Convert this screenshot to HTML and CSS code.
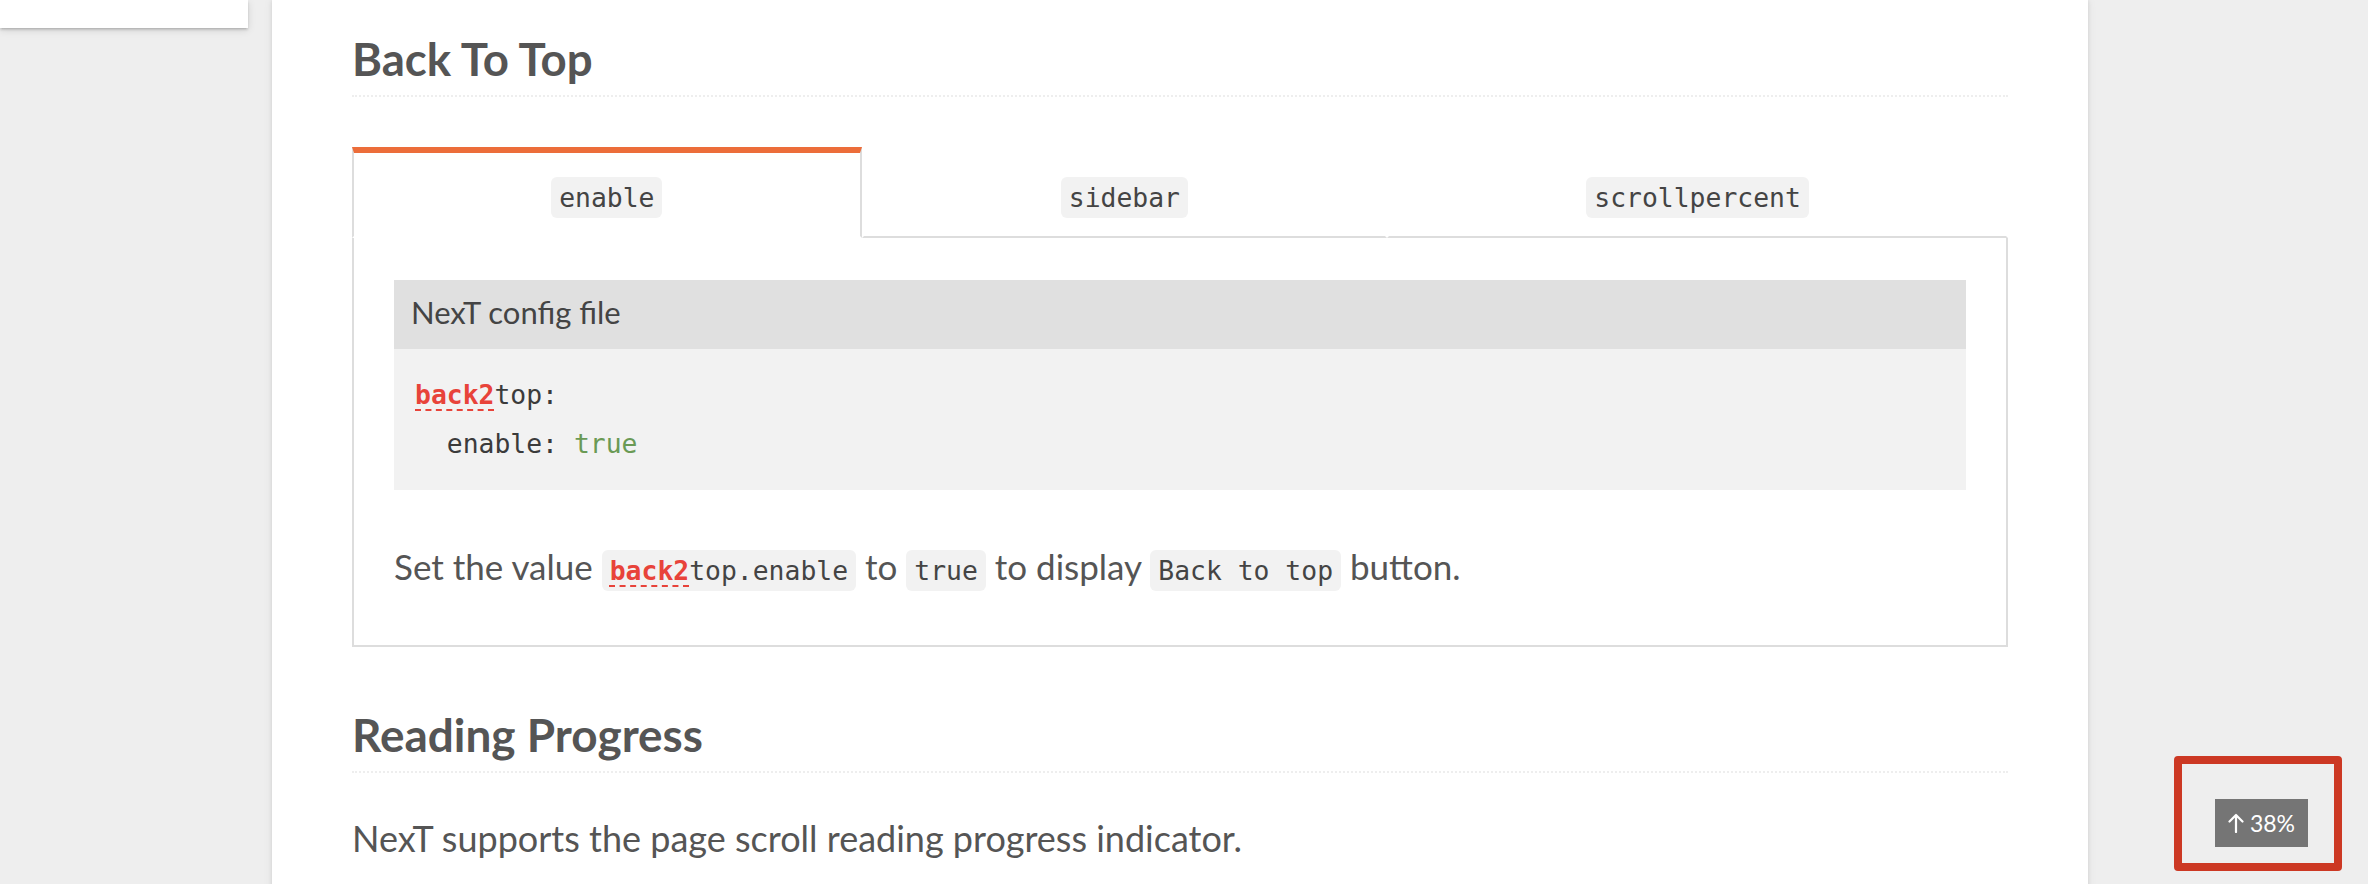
FILE: index.html
```html
<!DOCTYPE html>
<html lang="en">
<head>
<meta charset="utf-8">
<title>Back To Top - NexT</title>
<link rel="stylesheet" href="styles.css">
</head>
<body>
<div class="page">
  <aside class="sidebar"><div class="sidebar-inner"></div></aside>
  <main class="main">
    <article class="post-body">
      <h2 class="heading">Back To Top</h2>
      <div class="tabs">
        <ul class="nav-tabs">
          <li class="tab active"><code class="pill">enable</code></li>
          <li class="tab"><code class="pill">sidebar</code></li>
          <li class="tab"><code class="pill">scrollpercent</code></li>
        </ul>
        <div class="tab-content">
          <figure class="highlight">
            <figcaption class="caption">NexT config file</figcaption>
            <pre class="code"><span class="err">back2</span>top:
  enable: <span class="bool">true</span></pre>
          </figure>
          <p class="text">Set the value <code class="inline"><span class="err">back2</span>top.enable</code> to <code class="inline">true</code> to display <code class="inline">Back to top</code> button.</p>
        </div>
      </div>
      <h2 class="heading heading-next">Reading Progress</h2>
      <p class="text text-next">NexT supports the page scroll reading progress indicator.</p>
    </article>
  </main>
</div>
<div class="back-to-top">
  <svg class="arrow" viewBox="0 0 16 20" width="16" height="20" aria-hidden="true"><path d="M8 19V2M1.5 8.5L8 2l6.5 6.5" fill="none" stroke="#fff" stroke-width="2.2" stroke-linecap="round" stroke-linejoin="round"/></svg>
  <span class="percent">38%</span>
</div>
<div class="highlight-box"></div>
</body>
</html>
```
FILE: styles.css
```css
html, body {
  margin: 0;
  padding: 0;
  overflow: hidden;
  height: 884px;
}
body {
  background: #eee;
  color: #555;
  font-family: Lato, "Noto Sans", sans-serif;
}
.page {
  display: flex;
  align-items: flex-start;
  gap: 24px;
}
.sidebar {
  width: 248px;
  flex: none;
}
.sidebar-inner {
  height: 28px;
  background: #fff;
  box-shadow: 0 2px 2px 0 rgba(0,0,0,.12), 0 3px 1px -2px rgba(0,0,0,.06), 0 2px 8px 0 rgba(0,0,0,.12);
}
.main {
  width: 1816px;
  flex: none;
  min-height: 1000px;
  background: #fff;
  box-sizing: border-box;
  padding: 24px 80px 0;
  box-shadow: 0 0 4px rgba(0,0,0,.10), 0 0 10px rgba(0,0,0,.06);
}
.heading {
  margin: 0;
  font-size: 45.6px;
  font-weight: 700;
  line-height: 70px;
  padding-bottom: 1px;
  border-bottom: 2px dotted #eee;
  color: #555;
}
.heading-next {
  margin-top: 53px;
  font-size: 45.9px;
}
.tabs {
  margin-top: 50px;
}
.nav-tabs {
  display: flex;
  margin: 0;
  padding: 0;
  list-style: none;
}
.tab {
  flex: 1 1 auto;
  display: flex;
  align-items: center;
  justify-content: center;
  box-sizing: border-box;
  height: 91px;
  padding-top: 6px;
  border-top: 6px solid transparent;
  border-left: 2px solid transparent;
  border-right: 2px solid transparent;
  border-bottom: 2px solid #ddd;
  border-radius: 0;
}
.tab.active {
  border-top-color: #ec6d3a;
  border-left-color: #ddd;
  border-right-color: #ddd;
  border-bottom-color: transparent;
}
code, pre {
  font-family: "DejaVu Sans Mono", "Liberation Mono", monospace;
}
.pill {
  font-size: 26.4px;
  color: #444;
  background: #f2f2f2;
  border-radius: 6px;
  padding: 5px 8px;
}
.tab-content {
  border: 2px solid #ddd;
  border-top: none;
  padding: 42px 40px 44px;
}
.highlight {
  margin: 0;
}
.caption {
  background: #e0e0e0;
  height: 69px;
  line-height: 64px;
  padding: 0 17px;
  font-size: 31px;
  color: #444;
}
.code {
  margin: 0;
  background: #f2f2f2;
  padding: 21px 21px 22px;
  font-size: 26.4px;
  line-height: 49px;
  color: #3b3b3b;
}
.err {
  color: #e8433a;
  font-weight: 700;
  text-decoration: underline dashed #e8433a;
  text-decoration-thickness: 2px;
  text-underline-offset: 5px;
}
.bool {
  color: #6a9a55;
}
.text {
  margin: 46px 0 0;
  font-size: 35px;
  line-height: 61px;
  color: #555;
}
.text-next {
  margin-top: 35px;
  font-size: 36px;
}
.inline {
  font-size: 26.4px;
  color: #444;
  background: #f2f2f2;
  border-radius: 6px;
  padding: 5px 8px;
}
.back-to-top {
  position: fixed;
  left: 2215px;
  top: 799px;
  width: 93px;
  height: 48px;
  background: #757575;
  color: #fff;
  display: flex;
  align-items: center;
  justify-content: center;
  gap: 6px;
  font-size: 23px;
}
.arrow {
  display: block;
}
.highlight-box {
  position: fixed;
  left: 2174px;
  top: 756px;
  width: 168px;
  height: 115px;
  box-sizing: border-box;
  border: 8px solid #cc3823;
  border-radius: 4px;
}
```
